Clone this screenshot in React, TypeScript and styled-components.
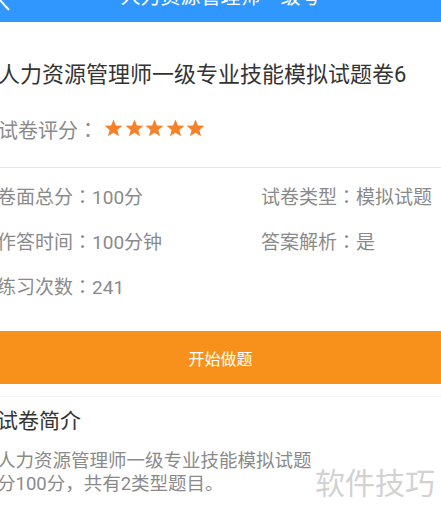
import styled, { createGlobalStyle } from 'styled-components';

const GlobalStyle = createGlobalStyle`
  body {
    margin: 0;
    background: #fff;
    overflow: hidden;
    font-family: Roboto, "Noto Sans CJK SC", sans-serif;
  }
`;

const info = [
  [['卷面总分', '100分'], ['试卷类型', '模拟试题']],
  [['作答时间', '100分钟'], ['答案解析', '是']],
  [['练习次数', '241'], null],
];

const Star = () => (
  <svg width="19" height="18" viewBox="0 0 24 23">
    <polygon
      points="12,0.5 15.1,8.2 23.4,8.7 17,14 19.1,22.1 12,17.6 4.9,22.1 7,14 0.6,8.7 8.9,8.2"
      fill="#f5822a"
    />
  </svg>
);

const App = () => {
  return (
    <Page>
      <GlobalStyle />
      <Header>
        <BackIcon width="12" height="24" viewBox="0 0 12 24">
          <path d="M11 1 L1 12 L11 23" fill="none" stroke="#fff" strokeWidth="2" />
        </BackIcon>
        <HeaderTitle>人力资源管理师一级考</HeaderTitle>
        <HeaderSpacer />
      </Header>

      <PaperTitle>人力资源管理师一级专业技能模拟试题卷6</PaperTitle>

      <RatingRow>
        <RatingLabel>
          试卷评分<Punct>：</Punct>
        </RatingLabel>
        <Stars>
          {[0, 1, 2, 3, 4].map((i) => (
            <Star key={i} />
          ))}
        </Stars>
      </RatingRow>

      <Divider />

      <InfoGrid>
        {info.map((row, i) => (
          <InfoRow key={i}>
            {row.map((cell, j) => (
              <InfoCell key={j}>
                {cell && (
                  <>
                    {cell[0]}
                    <Punct>：</Punct>
                    {cell[1]}
                  </>
                )}
              </InfoCell>
            ))}
          </InfoRow>
        ))}
      </InfoGrid>

      <StartButton>开始做题</StartButton>
      <ThinLine />

      <SectionTitle>试卷简介</SectionTitle>
      <Desc>
        <DescLine>人力资源管理师一级专业技能模拟试题卷6<Punct>，</Punct>总</DescLine>
        <DescLine>
          分100分<Punct>，</Punct>共有2类型题目。
        </DescLine>
      </Desc>

      <Watermark>软件技巧</Watermark>
    </Page>
  );
};

export default App;

const Page = styled.div`
  position: relative;
  width: 441px;
  height: 515px;
  overflow: hidden;
  background: #fff;
`;

const Header = styled.div`
  display: flex;
  align-items: flex-start;
  height: 22px;
  background: #2f97fd;
  overflow: hidden;
`;

const BackIcon = styled.svg`
  flex: none;
  margin-top: -13px;
  margin-left: -2px;
`;

const HeaderTitle = styled.div`
  flex: 1;
  text-align: center;
  color: #fff;
  font-size: 20px;
  line-height: 20px;
  margin-top: -13px;
  white-space: nowrap;
`;

const HeaderSpacer = styled.div`
  width: 10px;
  flex: none;
`;

const Punct = styled.span`
  font-family: "Noto Sans CJK JP", sans-serif;
  line-height: 1;
`;

const PaperTitle = styled.div`
  margin: 38px 0 0 -2px;
  height: 30px;
  font-size: 22px;
  line-height: 30px;
  color: #333;
  white-space: nowrap;
`;

const RatingRow = styled.div`
  display: flex;
  align-items: center;
  margin: 26px 0 0 -2px;
  height: 30px;
`;

const RatingLabel = styled.span`
  height: 30px;
  font-size: 20px;
  line-height: 30px;
  color: #8a8a8a;
`;

const Stars = styled.div`
  display: flex;
  gap: 1.5px;
  margin-left: 6px;
  margin-top: -7px;
`;

const Divider = styled.div`
  height: 1px;
  background: #e8e8e8;
  margin-top: 21px;
`;

const InfoGrid = styled.div`
  display: flex;
  flex-direction: column;
  gap: 15px;
  padding-top: 15px;
  margin-left: -3px;
`;

const InfoRow = styled.div`
  display: grid;
  grid-template-columns: 264px 1fr;
  height: 30px;
`;

const InfoCell = styled.div`
  height: 30px;
  font-size: 19px;
  line-height: 30px;
  color: #8a8a8a;
  white-space: nowrap;
`;

const StartButton = styled.div`
  display: flex;
  align-items: center;
  justify-content: center;
  height: 53px;
  margin-top: 28px;
  background: #f8911b;
  color: #fff;
  font-size: 16px;
`;

const ThinLine = styled.div`
  height: 1px;
  margin-top: 12px;
  background: #f2f2f2;
`;

const SectionTitle = styled.div`
  margin: 9px 0 0 -3px;
  height: 30px;
  font-size: 21px;
  line-height: 30px;
  color: #333;
`;

const Desc = styled.div`
  margin: 14px 0 0 -3px;
  display: flex;
  flex-direction: column;
`;

const DescLine = styled.div`
  height: 23px;
  font-size: 18.5px;
  line-height: 23px;
  color: #8a8a8a;
  white-space: nowrap;
  overflow: hidden;
`;

const Watermark = styled.div`
  position: absolute;
  left: 311px;
  top: 450px;
  width: 130px;
  height: 58px;
  padding: 14px 0 0 4px;
  box-sizing: border-box;
  background: #fff;
  color: #d2d2d2;
  font-size: 30px;
  line-height: 40px;
  white-space: nowrap;
`;
